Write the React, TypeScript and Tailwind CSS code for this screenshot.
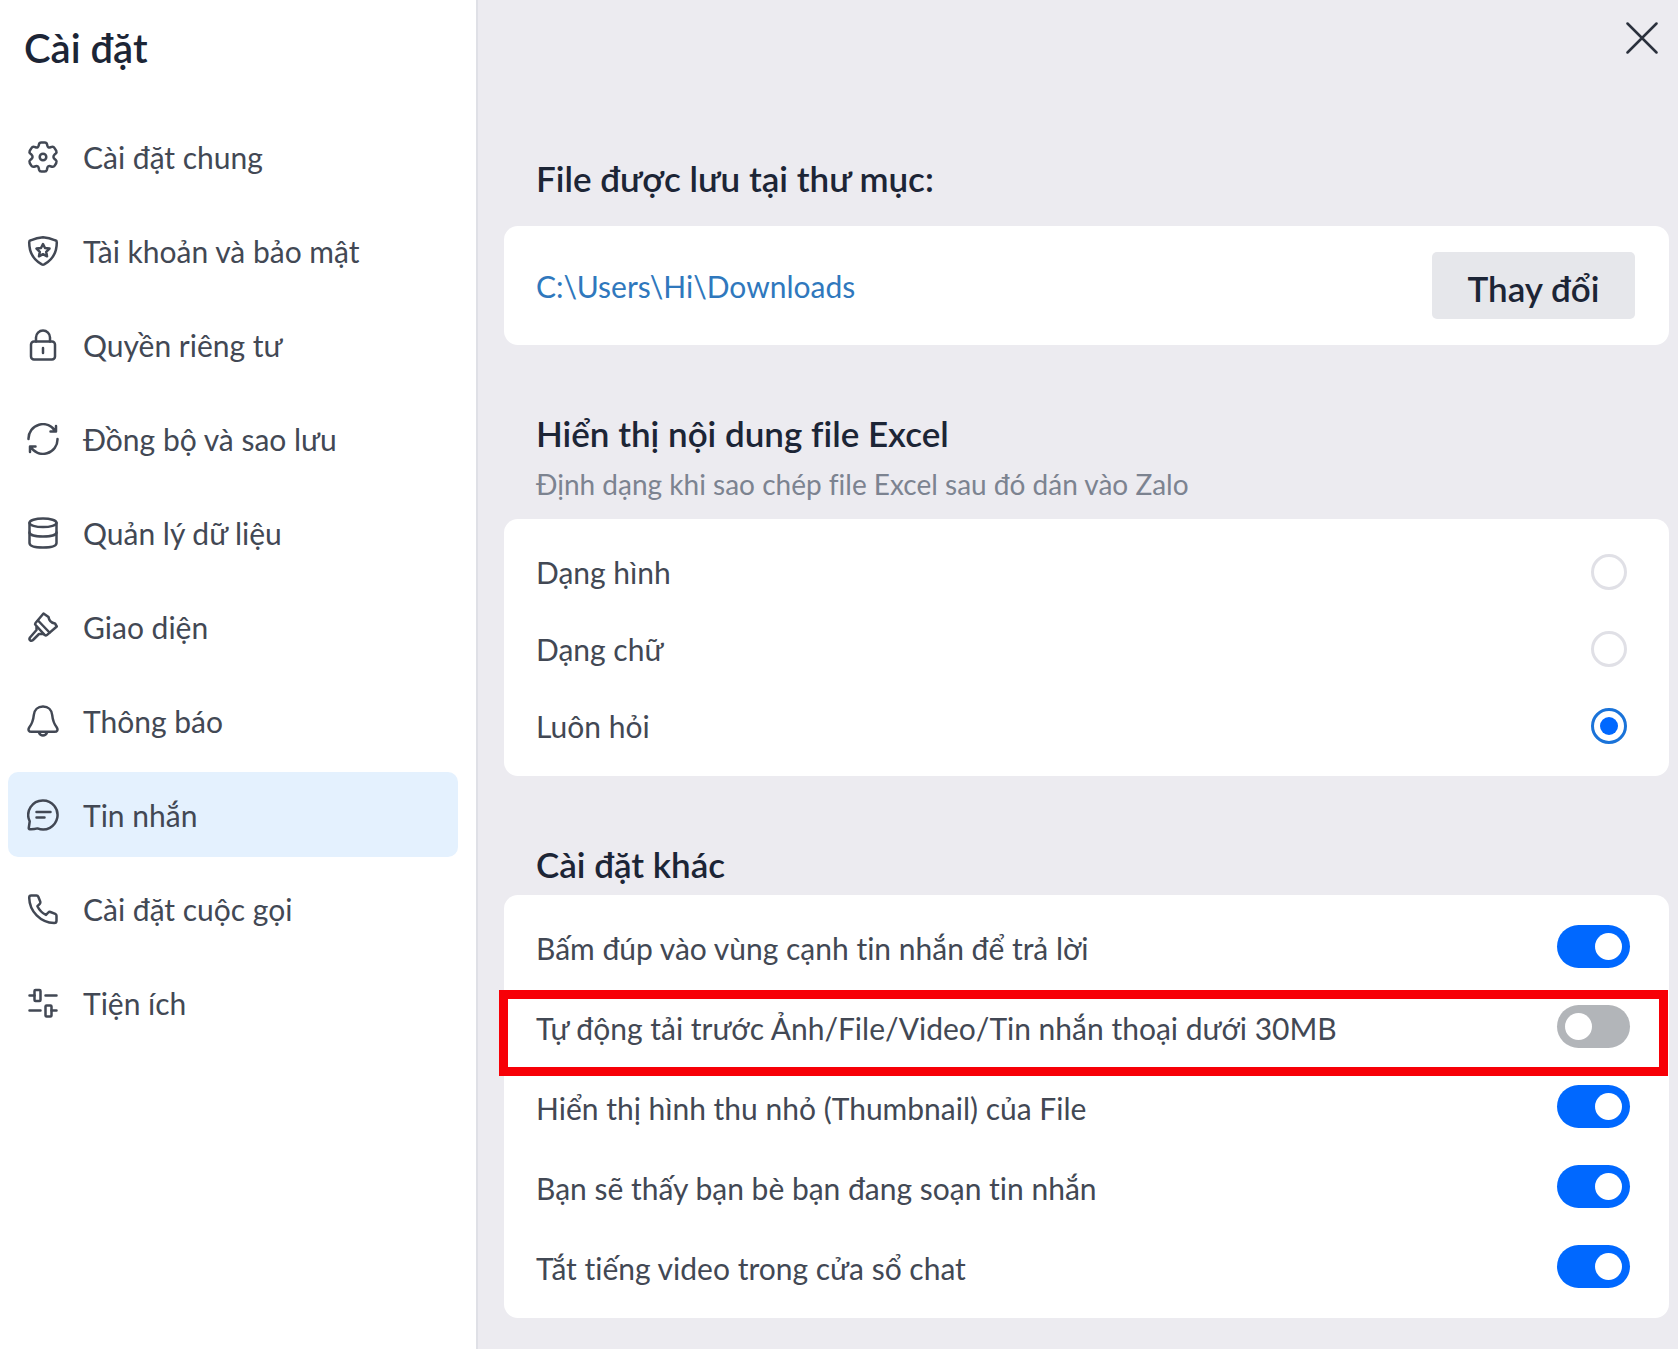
import { useState } from "react";
import type { ReactNode } from "react";

type NavItem = { id: string; label: string; icon: ReactNode };

const navItems: NavItem[] = [
  {
    id: "general",
    label: "Cài đặt chung",
    icon: (
      <>
        <path d="M11.700 4.500 12 3.200Q12.400 1.500 14.200 1.500H17.800Q19.600 1.500 20 3.200L20.300 4.500Q20.900 7.200 23.500 6.300L24.800 5.900Q26.500 5.400 27.400 6.900L29.300 9.900Q30 11.500 28.700 12.600L27.600 13.500Q25.300 16 27.600 18L28.900 19.200Q30.200 20.400 29.300 22L27.700 24.600Q26.700 26.200 25 25.700L23.300 25.200Q20.900 24.500 20.300 27L19.900 28.800Q19.400 30.500 17.600 30.500H14.400Q12.600 30.500 12.100 28.800L11.700 27Q11.100 24.500 8.700 25.200L7 25.700Q5.300 26.200 4.300 24.600L2.700 22Q1.800 20.400 3.100 19.200L4.400 18Q6.700 16 4.400 13.500L3.300 12.600Q2 11.500 2.700 9.900L4.600 6.900Q5.500 5.400 7.200 5.900L8.500 6.300Q11.100 7.200 11.700 4.500Z" />
        <circle cx="16" cy="16" r="3.3" />
      </>
    ),
  },
  {
    id: "security",
    label: "Tài khoản và bảo mật",
    icon: (
      <>
        <path d="M16 2.200Q22 2.800 28.300 5.300 29.800 5.700 29.800 7.200C29.800 17 26.500 24.300 17.200 29.400Q16 30 14.800 29.400C5.500 24.300 2.200 17 2.200 7.200Q2.200 5.700 3.700 5.300 10 2.800 16 2.200Z" />
        <path d="m16 9 2 4 4.500.6-3.300 3.200.8 4.500-4-2.100-4 2.100.8-4.500-3.300-3.200 4.500-.6Z" />
      </>
    ),
  },
  {
    id: "privacy",
    label: "Quyền riêng tư",
    icon: (
      <>
        <rect x="4" y="12.5" width="24" height="18" rx="3" />
        <path d="M9 12.500V8.500a7 7 0 0 1 14 0v4M16 19v5" />
      </>
    ),
  },
  {
    id: "sync",
    label: "Đồng bộ và sao lưu",
    icon: (
      <>
        <path d="M1.500 16A14.500 14.500 0 0 1 28.500 8.300M29 3v5.500h-5.500" />
        <path d="M30.500 16A14.500 14.500 0 0 1 3.500 23.700M3 29v-5.500h5.500" />
      </>
    ),
  },
  {
    id: "data",
    label: "Quản lý dữ liệu",
    icon: (
      <>
        <ellipse cx="16" cy="5.800" rx="13.5" ry="4.3" />
        <path d="M2.500 6v20c0 2.800 5 4.500 13.500 4.500s13.500-1.700 13.500-4.500V6" />
        <path d="M2.500 15.500c0 2.500 6 4 13.500 4s13.500-1.500 13.500-4" />
      </>
    ),
  },
  {
    id: "theme",
    label: "Giao diện",
    icon: (
      <>
        <path d="M8.500 12 16.500 2.500 21.500 6q.8 5.500 6.500 6.500l1.800 3-10 8.600q-1 .8-2 0L8.600 14q-1-.9-.1-2Z" />
        <path d="m11 9.500 11.500 12M9.500 16v3L3 26.500q-1.500 2.500.8 3.200 1.700.3 2.700-1.200l5.500-5.500h4.500" />
      </>
    ),
  },
  {
    id: "notify",
    label: "Thông báo",
    icon: (
      <>
        <path d="M16 1.500c-5.300 0-8.700 3.500-9.200 8.500-.5 5.200-1.500 8.500-4.600 12.500-1.500 2.400-.4 4.300 2.300 4.300h23c2.700 0 3.800-1.900 2.300-4.300-3.100-4-4.100-7.300-4.600-12.500-.5-5-3.900-8.500-9.200-8.500Z" />
        <path d="M12 27.500q1.200 3 4 3t4-3" />
      </>
    ),
  },
  {
    id: "messages",
    label: "Tin nhắn",
    icon: (
      <>
        <path d="M16 1.500A14.500 14.500 0 1 1 10.500 29.400q-3.700 1-7.700.8-1.200-.1-1-1.400l.9-6.500A14.500 14.500 0 0 1 16 1.500Z" />
        <path d="M9.500 13h14M9.500 18.500h8" />
      </>
    ),
  },
  {
    id: "calls",
    label: "Cài đặt cuộc gọi",
    icon: (
      <path d="M4.200 2.500h5.300q1.300 0 1.800 1.200l2 5q.4 1.200-.5 2.100l-2.400 2.400q3 6 8.600 8.700l2.300-2.400q.9-.9 2.100-.5l4.900 1.900q1.200.5 1.200 1.800v5q0 2.300-2.300 2.300C13.500 29.500 2.500 18.500 2.200 4.700q0-2.200 2-2.200Z" />
    ),
  },
  {
    id: "tools",
    label: "Tiện ích",
    icon: (
      <>
        <path d="M2.500 8.500h5M18.500 8.500h11M2.500 23.500h11M24.500 23.500h5" />
        <rect x="7.500" y="3" width="6" height="11" rx="1" />
        <rect x="18.500" y="18.500" width="6" height="11" rx="1" />
      </>
    ),
  },
];

const excelOptions = ["Dạng hình", "Dạng chữ", "Luôn hỏi"];

const otherSettings = [
  { label: "Bấm đúp vào vùng cạnh tin nhắn để trả lời", on: true },
  {
    label: "Tự động tải trước Ảnh/File/Video/Tin nhắn thoại dưới 30MB",
    on: false,
    highlighted: true,
  },
  { label: "Hiển thị hình thu nhỏ (Thumbnail) của File", on: true },
  { label: "Bạn sẽ thấy bạn bè bạn đang soạn tin nhắn", on: true },
  { label: "Tắt tiếng video trong cửa sổ chat", on: true },
];

function Sidebar() {
  const [active, setActive] = useState("messages");
  return (
    <aside className="w-[478px] shrink-0 border-r-2 border-[#dfe0e6] bg-white pl-2 pr-[18px]">
      <h1 className="pt-6 pl-4 text-[40px] leading-[48px] font-semibold text-[#1c2536]">
        Cài đặt
      </h1>
      <nav className="mt-[42px] flex flex-col gap-[9px]">
        {navItems.map((item) => (
          <button
            key={item.id}
            type="button"
            onClick={() => setActive(item.id)}
            className={`flex h-[85px] w-full items-center gap-6 rounded-[10px] pl-[19px] text-left text-[30px] leading-10 ${
              active === item.id ? "bg-[#e4f1fe]" : ""
            }`}
          >
            <svg
              viewBox="0 0 32 32"
              className="size-8 shrink-0 fill-none stroke-[#424854] stroke-[2.5]"
              strokeLinecap="round"
              strokeLinejoin="round"
            >
              {item.icon}
            </svg>
            {item.label}
          </button>
        ))}
      </nav>
    </aside>
  );
}

function ExcelCard() {
  const [format, setFormat] = useState("Luôn hỏi");
  return (
    <div className="rounded-[14px] bg-white pt-[14px] pb-3 pr-[42px] pl-8">
      {excelOptions.map((option) => (
        <label key={option} className="flex h-[77px] items-center justify-between">
          {option}
          <input
            type="radio"
            name="excel"
            checked={format === option}
            onChange={() => setFormat(option)}
            className="grid size-9 shrink-0 appearance-none place-content-center rounded-full border-3 border-[#e0e0e6] checked:border-[#1a73d9] checked:before:size-[18px] checked:before:rounded-full checked:before:bg-[#0068ff]"
          />
        </label>
      ))}
    </div>
  );
}

function OtherCard() {
  return (
    <div className="rounded-[14px] bg-white pt-[11px] pb-3">
      {otherSettings.map((setting) => (
        <label
          key={setting.label}
          className="relative flex h-20 items-center justify-between pr-[39px] pl-8"
        >
          <span className="pt-1">{setting.label}</span>
          <input
            type="checkbox"
            role="switch"
            defaultChecked={setting.on}
            className="flex h-[43px] w-[73px] shrink-0 appearance-none items-center rounded-full bg-[#b2b5b9] px-2 before:size-[27px] before:rounded-full before:bg-white checked:justify-end checked:bg-[#0068ff]"
          />
          {setting.highlighted && (
            <span className="pointer-events-none absolute top-1 right-px -bottom-[10px] -left-[5px] border-9 border-[#f70007]" />
          )}
        </label>
      ))}
    </div>
  );
}

export default function App() {
  return (
    <div className="bg-white pb-0.5 font-['Lato',sans-serif] text-[#424854] [font-variant-ligatures:none]">
      <div className="flex min-h-[calc(100vh-2px)]">
        <Sidebar />
        <main className="min-w-0 flex-1 bg-[#ecebf0] pr-[9px] pb-[31px] pl-[26px] text-[30px] leading-10">
          <div className="flex justify-end pt-[18px] pr-[7px]">
            <button type="button" aria-label="Đóng" className="p-1">
              <svg
                viewBox="0 0 32 32"
                className="size-8 stroke-[#2b313d] stroke-[2.5]"
                strokeLinecap="round"
              >
                <path d="M1.500 1.500l29 29M30.500 1.500l-29 29" />
              </svg>
            </button>
          </div>

          <section className="pt-[100px]">
            <h2 className="pb-7 pl-8 text-[35px] font-semibold text-[#1c2536]">
              File được lưu tại thư mục:
            </h2>
            <div className="flex h-[119px] items-center justify-between rounded-[14px] bg-white pr-[34px] pl-8">
              <a href="#downloads" className="text-[#2f78bd]">
                C:\Users\Hi\Downloads
              </a>
              <button
                type="button"
                className="h-[67px] w-[203px] rounded-[5px] bg-[#e6e7eb] pt-1 text-[35px] font-semibold text-[#1c2536]"
              >
                Thay đổi
              </button>
            </div>
          </section>

          <section className="pt-[68px]">
            <h2 className="pl-8 text-[35px] font-semibold text-[#1c2536]">
              Hiển thị nội dung file Excel
            </h2>
            <p className="pt-[11px] pb-[15px] pl-8 text-[28px] text-[#7c8390]">
              Định dạng khi sao chép file Excel sau đó dán vào Zalo
            </p>
            <ExcelCard />
          </section>

          <section className="pt-[68px]">
            <h2 className="pb-[11px] pl-8 text-[35px] font-semibold text-[#1c2536]">
              Cài đặt khác
            </h2>
            <OtherCard />
          </section>
        </main>
      </div>
    </div>
  );
}
